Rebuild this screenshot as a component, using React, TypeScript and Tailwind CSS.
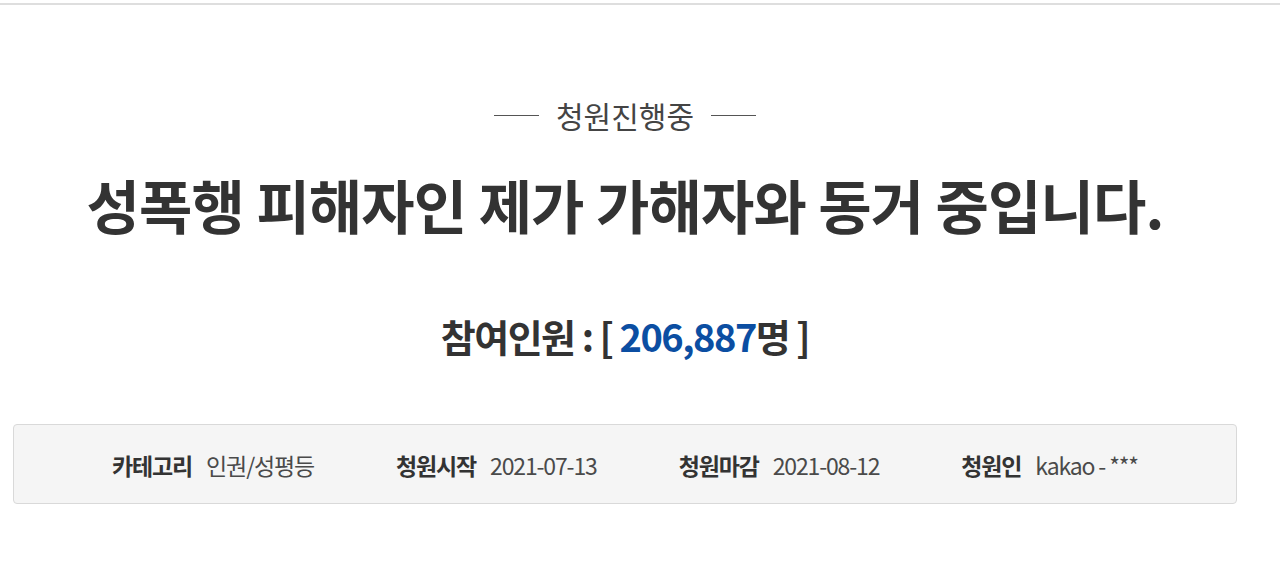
import React from 'react';

const InfoItem: React.FC<{ label: string; value: string }> = ({ label, value }) => (
    <li className="flex items-center gap-[14px]">
        <span className="font-bold text-[#333]">{label}</span>
        <span className="text-[#4a4a4a]">{value}</span>
    </li>
);

const App: React.FC = () => {
    return (
        <div
            className="min-h-[575px] w-full bg-white"
            style={{ fontFamily: '"Noto Sans CJK KR", "Noto Sans", sans-serif' }}
        >
            <div className="h-[3px]" />
            <div className="h-[2px] bg-[#dedede]" />
            <div className="w-[1250px]">
                <div className="flex flex-col items-center pt-[95px]">
                    <div className="flex items-center gap-[17px] text-[#444]">
                        <span className="block h-px w-[45px] bg-[#555]" />
                        <span className="text-[30px] leading-none">청원진행중</span>
                        <span className="block h-px w-[45px] bg-[#555]" />
                    </div>
                    <h1 className="mt-[45px] text-[58px] font-bold leading-none tracking-[-0.015em] text-[#333]">
                        성폭행 피해자인 제가 가해자와 동거 중입니다.
                    </h1>
                    <p className="mt-[84px] text-[38px] font-bold leading-none tracking-[-0.04em] text-[#333]">
                        참여인원 : [ <span className="text-[#0b4ea2]">206,887</span>명 ]
                    </p>
                </div>
                <div className="mx-[13px] mt-[69px] rounded-[4px] border border-[#d9d9d9] bg-[#f5f5f5]">
                    <ul className="flex h-[78px] items-center justify-center gap-[82px] pt-[3px] text-[23px] tracking-[-0.05em]">
                        <InfoItem label="카테고리" value="인권/성평등" />
                        <InfoItem label="청원시작" value="2021-07-13" />
                        <InfoItem label="청원마감" value="2021-08-12" />
                        <InfoItem label="청원인" value="kakao - ***" />
                    </ul>
                </div>
            </div>
        </div>
    );
};

export default App;
